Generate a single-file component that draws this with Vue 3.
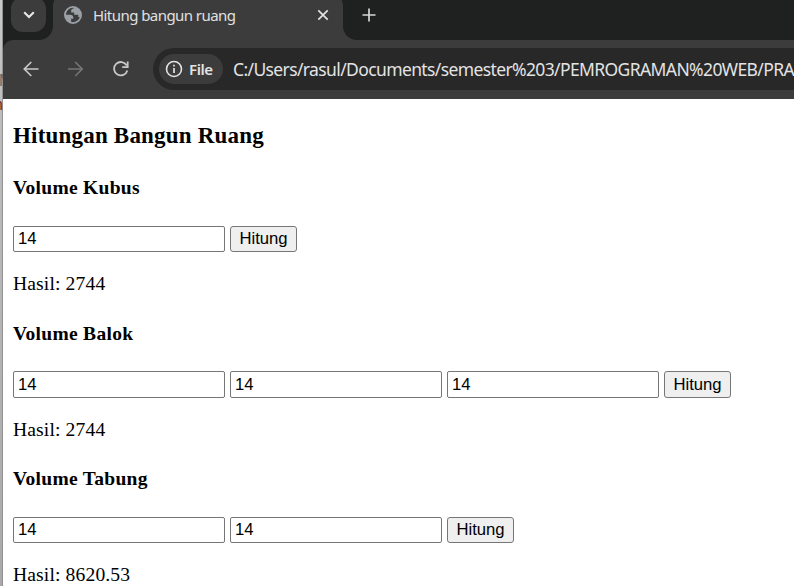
<script setup>
import { reactive } from 'vue'

const forms = reactive([
  { title: 'Volume Kubus', values: ['14'], result: '2744' },
  { title: 'Volume Balok', values: ['14', '14', '14'], result: '2744' },
  { title: 'Volume Tabung', values: ['14', '14'], result: '8620.53' },
])

function calculate(form) {
  const n = form.values.map(Number)
  if (n.length === 1) form.result = String(n[0] ** 3)
  else if (n.length === 3) form.result = String(n[0] * n[1] * n[2])
  else form.result = (Math.PI * n[0] ** 2 * n[1]).toFixed(2)
}
</script>

<template>
  <div class="screen">
    <aside class="behind">
      <span class="peek grey">M</span>
      <span class="peek red">n</span>
    </aside>
    <div class="window">
      <header class="tabs">
        <div class="search-cell">
          <button class="tab-search" aria-label="Tabs">
            <svg width="12" height="8" viewBox="0 0 12 8"><path d="M1.2 1.2 6 6l4.8-4.8" fill="none" stroke="#e8e8e8" stroke-width="2.1" /></svg>
          </button>
        </div>
        <div class="tab-wrap">
          <div class="tab">
            <svg class="globe" width="18" height="18" viewBox="0 0 18 18">
              <circle cx="9" cy="9" r="8.1" fill="#3c3c3c" stroke="#9aa0a6" stroke-width="1.8" />
              <path d="M1 8.7h5.2c2 0 3.1 1.1 3.1 2.8v1.2H7.1v4.4C3.4 16.3.7 13 1 8.7zM9.7 1v1.5c-1.5.1-2.5.8-2.5 2.3v1.7h3v2.2h4.1v2.6h2.5C18 6 14.5 1.3 9.7 1z" fill="#9aa0a6" />
            </svg>
            <span class="tab-title">Hitung bangun ruang</span>
            <svg class="close" width="12" height="12" viewBox="0 0 12 12"><path d="m1.3 1.3 9.4 9.4m0-9.4-9.4 9.4" stroke="#e3e3e3" stroke-width="1.7" /></svg>
          </div>
        </div>
        <div class="tab-rest">
          <svg width="14" height="14" viewBox="0 0 14 14"><path d="M7 .5v13M.5 7h13" stroke="#d5d5d5" stroke-width="1.7" /></svg>
        </div>
      </header>
      <nav class="toolbar">
        <svg class="nav-icon" width="16" height="16" viewBox="0 0 16 16"><path d="M15.5 8H1.5M8.3 1 1.3 8l7 7" fill="none" stroke="#c7c7c7" stroke-width="1.7" /></svg>
        <svg class="nav-icon" width="16" height="16" viewBox="0 0 16 16"><path d="M0 8h14M7.2 1l7 7-7 7" fill="none" stroke="#757575" stroke-width="1.7" /></svg>
        <svg class="nav-icon" width="16" height="16" viewBox="0 0 16 16"><path d="M14.3 9.4A6.7 6.7 0 1 1 13.7 4.5M14.7.6v5.6H9.2" fill="none" stroke="#c7c7c7" stroke-width="1.8" /></svg>
        <div class="address">
          <span class="chip">
            <svg width="18" height="18" viewBox="0 0 18 18"><circle cx="9" cy="9" r="7.5" fill="none" stroke="#e3e3e3" stroke-width="1.6" /><path d="M9 8v5M9 4.8v1.7" stroke="#e3e3e3" stroke-width="1.7" /></svg>
            <b>File</b>
          </span>
          <span class="url">C:/Users/rasul/Documents/semester%203/PEMROGRAMAN%20WEB/PRA</span>
        </div>
      </nav>
      <main class="page">
        <h3>Hitungan Bangun Ruang</h3>
        <section v-for="form in forms" :key="form.title">
          <h4>{{ form.title }}</h4>
          <form class="row" @submit.prevent="calculate(form)">
            <input v-for="(v, i) in form.values" :key="i" v-model="form.values[i]" type="text">
            <button type="submit">Hitung</button>
          </form>
          <p>Hasil: {{ form.result }}</p>
        </section>
      </main>
    </div>
  </div>
</template>

<style>
body { margin: 0; overflow: hidden; }
</style>

<style scoped>
.screen { display: flex; width: 794px; height: 586px; overflow: hidden; background: #fff; }
.behind { flex: none; width: 3px; overflow: hidden; box-shadow: inset -1px 0 #929292; background: linear-gradient(#c8c8c8 0, #bdbdbd 110px, #a9a9a9 100%); font: 16px "Liberation Sans", sans-serif; }
.peek { display: block; line-height: 20px; }
.grey { padding-top: 71px; margin-left: -1px; color: #666; }
.red { padding-top: 4px; margin-left: -6px; color: #7d1d24; }
.window { flex: none; width: 791px; height: 586px; overflow: hidden; background: linear-gradient(#1f2120 60px, #fff 60px); }
.tabs { display: flex; height: 40px; background: #3c3c3c; overflow: hidden; }
.search-cell { width: 50px; box-sizing: border-box; padding-left: 8px; background: #1f2120; border-bottom-right-radius: 14px; }
.tab-search { display: flex; justify-content: center; align-items: center; width: 35px; height: 35px; margin-top: -3px; padding: 0; border: 0; border-radius: 12px; background: #3c3c3c; }
.tab-wrap { width: 290px; background: linear-gradient(#1f2120 20px, #3c3c3c 20px); }
.tab { display: flex; align-items: center; height: 46px; margin-top: -6px; box-sizing: border-box; padding: 6px 14px 10px 11px; border-radius: 12px 12px 0 0; background: #3c3c3c; }
.globe { flex: none; }
.tab-title { margin-left: 11px; flex: 1; white-space: nowrap; font: 15px/24px "Noto Sans", sans-serif; letter-spacing: -0.56px; color: #e0e0e0; }
.tab-rest { flex: 1; box-sizing: border-box; padding: 8px 0 0 19px; background: #1f2120; border-bottom-left-radius: 14px; }
.toolbar { display: flex; align-items: center; height: 59px; box-sizing: border-box; padding: 0 0 1px 20px; border-top-left-radius: 10px; background: #3c3c3c; }
.nav-icon { flex: none; margin-right: 29px; }
.address { display: flex; align-items: center; flex: 1; min-width: 0; height: 42px; margin-left: -5px; padding-left: 6px; overflow: hidden; border-radius: 21px 0 0 21px; background: #282828; }
.chip { display: flex; align-items: center; gap: 6px; flex: none; width: 64px; height: 30px; box-sizing: border-box; padding-left: 6px; border-radius: 15px; background: #3c3c3c; }
.chip b { font: 600 15px/24px "Noto Sans", sans-serif; letter-spacing: -0.4px; color: #e3e3e3; }
.url { margin-left: 10px; white-space: nowrap; font: 17.5px/26px "Noto Sans", sans-serif; letter-spacing: -0.62px; color: #e3e3e3; }
.page { height: 487px; box-sizing: border-box; padding: 22px 0 0 10px; background: #fff; font: 19.6px/24px "Liberation Serif", serif; color: #000; }
h3 { margin: 0 0 27px; font-size: 23px; line-height: 30px; letter-spacing: 0.2px; }
h4 { margin: 0; font-size: 19.5px; line-height: 20px; letter-spacing: 0.29px; }
section { height: 145.6px; }
.row { display: flex; gap: 5px; margin-top: 27.7px; height: 26.4px; }
input { width: 212px; height: 26.4px; box-sizing: border-box; padding: 0.4px 4px 0; border: 1px solid #767676; border-radius: 2px; background: #fff; color: #000; font: 16.67px "Liberation Sans", Arial, sans-serif; }
.row button { width: 67px; height: 26.4px; box-sizing: border-box; padding: 0.4px 0 0; border: 1px solid #767676; border-radius: 3px; background: #efefef; color: #000; font: 16.67px "Liberation Sans", Arial, sans-serif; }
p { margin: 20.2px 0 0; line-height: 24px; letter-spacing: 0.13px; white-space: nowrap; }
</style>
